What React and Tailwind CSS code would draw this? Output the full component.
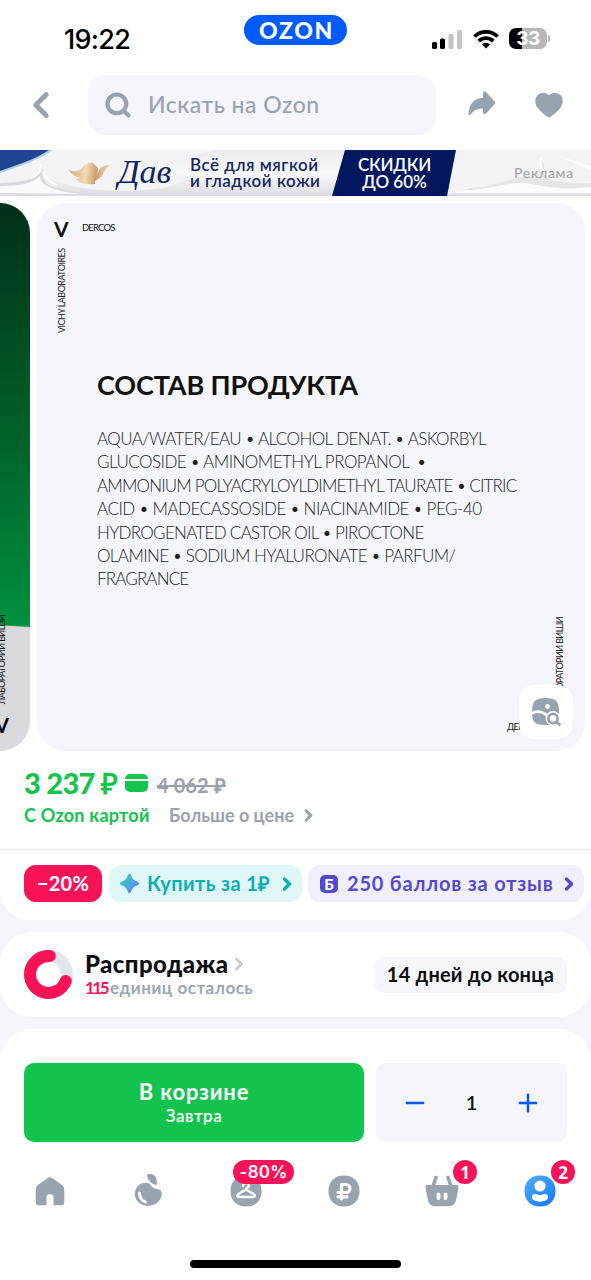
import { ChevronLeft, ChevronRight, Minus, Plus, Search } from 'lucide-react'

const ingredients = [
  { text: 'AQUA/WATER/EAU • ALCOHOL DENAT. • ASKORBYL', tracking: 'tracking-[-0.57px]' },
  { text: 'GLUCOSIDE • AMINOMETHYL PROPANOL  •', tracking: 'tracking-[-0.53px]' },
  { text: 'AMMONIUM POLYACRYLOYLDIMETHYL TAURATE • CITRIC', tracking: 'tracking-[-0.82px]' },
  { text: 'ACID • MADECASSOSIDE • NIACINAMIDE • PEG-40', tracking: 'tracking-[-0.48px]' },
  { text: 'HYDROGENATED CASTOR OIL • PIROCTONE', tracking: 'tracking-[-0.7px]' },
  { text: 'OLAMINE • SODIUM HYALURONATE • PARFUM/', tracking: 'tracking-[-0.6px]' },
  { text: 'FRAGRANCE', tracking: 'tracking-[-0.85px]' },
]

const blob = 'M16 .5C25.500.5 31.500 6.500 31.500 16S25.500 31.500 16 31.500.5 25.500.5 16 6.500.5 16 .5z'

function StatusBar() {
  return (
    <div className="flex h-[75px] items-start pl-[64px]">
      <div className="mt-[26px] w-[119px] font-['Inter'] text-[27px] leading-[28px] font-medium tracking-[-0.7px] text-black">19:22</div>
      <div className="mt-[15px] ml-[61px] flex h-[30px] w-[103px] items-center justify-center rounded-full bg-[#005bff] pl-[2px] text-[23px] leading-[30px] font-black tracking-[1.6px] text-white">
        OZON
      </div>
      <div className="mt-[28px] ml-[85px] flex items-center">
        <svg width="31" height="20" viewBox="0 0 31 20">
          <rect x="0" y="13" width="5" height="7" rx="1.5" />
          <rect x="8" y="9.500" width="5" height="10.500" rx="1.500" />
          <rect x="16.500" y="5" width="5" height="15" rx="1.500" fill="#c4c4c4" />
          <rect x="25" y="1" width="5" height="19" rx="1.500" fill="#c4c4c4" />
        </svg>
        <svg className="ml-[10px]" width="26" height="20" viewBox="0 0 26 20" fill="none" stroke="#000" strokeWidth="3.800">
          <path d="M1.500 7.500a16.500 16.500 0 0 1 23 0" />
          <path d="M5.700 12.200a10.300 10.300 0 0 1 14.600 0" />
          <path d="M13 19.500l-4-4.100a5.700 5.700 0 0 1 8 0z" fill="#000" stroke="none" />
        </svg>
        <div className="ml-[10px] flex h-[21px] w-[38px] items-center justify-center rounded-[7px] bg-linear-to-r from-black from-34% to-[#b8b8b8] to-34% font-['Inter'] text-[19px] leading-[21px] font-bold tracking-[-0.5px] text-white">
          33
        </div>
        <div className="ml-px h-[7px] w-[2px] shrink-0 rounded-r-full bg-[#b8b8b8]" />
      </div>
    </div>
  )
}

function Header() {
  return (
    <div className="flex h-[75px] items-start text-[#97a3ae]">
      <ChevronLeft className="mt-[9px] ml-[20px] h-[42px] w-[42px]" strokeWidth={2.8} />
      <div className="ml-[26px] flex h-[60px] w-[348px] items-center rounded-[18px] bg-[#f5f6fb] pl-[16px]">
        <Search className="h-[28px] w-[28px]" strokeWidth={3.6} />
        <span className="mb-[2px] ml-[16px] text-[23px] leading-[30px] font-medium tracking-[0.5px] whitespace-nowrap text-[#99a3ae]">Искать на Ozon</span>
      </div>
      <svg className="mt-[15px] ml-[31px]" width="30" height="28" viewBox="0 0 30 28" fill="currentColor">
        <path d="M16 3.500c0-2.200 1.600-2.700 3-1.500l8.500 9.300c1 1.100 1 2.300 0 3.300L19 23.500c-1.400 1.200-3 .7-3-1.300v-3.800c-5.500 0-9 1.600-12.300 6-1 1.400-2.400.8-2.200-.8C2.300 13.300 7.300 8.300 16 7.700z" />
      </svg>
      <svg className="mt-[17px] ml-[38px]" width="28" height="27" viewBox="0 0 28 27" fill="currentColor">
        <path d="M14 3.200C17-.2 22.500-.2 25.600 3.200 29 7 28 12.500 25 16.300c-2.600 3.300-6.500 6.600-9.700 8.700-.9.500-1.700.5-2.600 0C9.500 22.900 5.600 19.600 3 16.300 0 12.500-1 7 2.400 3.200 5.500-.2 11-.2 14 3.200z" />
      </svg>
    </div>
  )
}

function Banner() {
  return (
    <div className="relative flex h-[46px] overflow-hidden bg-linear-to-b from-[#ececf0] via-[#fafafc] to-[#dddde1]">
      <svg className="absolute inset-0" width="591" height="46" viewBox="0 0 591 46" fill="none">
        <path d="M52 0C34 12 20 17 0 24v12c25-5 30-8 44-10 18 9 55 20 120 12l20-7-40-12L215 0z" fill="#f4f4f7" />
        <path d="M0 33c25-1 36-3 42-16 2 10 0 15 10 20 30 8 50 7 75 6L20 46 0 42z" fill="#d9d9df" />
        <path d="M0 36c22 0 33-3 40-10 0 11 20 16 42 18L0 43z" fill="#fafafd" />
        <path d="M41 14c1 7-3 11-10 14m12-7c1 7 5 10 14 14" stroke="#fff" strokeWidth="2" />
        <path d="M0 0h53C36 11 18 17 0 23z" fill="#a9cfed" />
        <path d="M0 0h49C34 10 17 15 0 21z" fill="#1f4590" />
        <path d="M455 0h136v44H440z" fill="#f3f3f6" />
        <path d="M470 38c20 0 35-8 52-11 9-1 17-4 22-15 0 12 2 18 12 19 15 2 24 3 35 2v11H450z" fill="#e6e6ea" />
        <path d="M455 40c30 2 50-8 68-7 20 2 32 8 68 4v6H455zM555 5l36 11v4z" fill="#fcfcfe" />
        <path d="M541 8c-2 9 2 14 8 20" stroke="#fff" strokeWidth="2" />
        <path d="M345 0h111l-9 46H332z" fill="#03175e" />
        <defs>
          <linearGradient id="gold" x1="70" y1="20" x2="110" y2="24" gradientUnits="userSpaceOnUse">
            <stop stopColor="#d4ad7f" />
            <stop offset=".4" stopColor="#f3d9b4" />
            <stop offset=".65" stopColor="#cda070" />
            <stop offset="1" stopColor="#f5ddbb" />
          </linearGradient>
        </defs>
        <path d="M68 20c5 2 10 2 14-2 3-4 7-6 11-5l4 4c2 2 1 5 0 7 3-6 6-9 13-9-6 5-6 9-9 12-3 2-4 3-6 4v3c-6 1-14 0-19-5l5-1c-5-1-9-4-13-8z" fill="url(#gold)" />
      </svg>
      <div className="relative mt-[4px] ml-[118px] w-[72px] font-['Liberation_Serif'] text-[34px] leading-[36px] tracking-[-0.1px] text-[#0c2461] italic">Дав</div>
      <div className="relative mt-[7px] w-[142px] text-[17px] leading-[16px] font-semibold tracking-[0.5px] whitespace-nowrap text-[#14275f]">
        <p>Всё для мягкой</p>
        <p>и гладкой кожи</p>
      </div>
      <div className="relative mt-[6px] w-[125px] text-center text-[17px] leading-[17px] font-semibold whitespace-nowrap text-white">
        <p className="tracking-[-0.2px]">СКИДКИ</p>
        <p>ДО 60%</p>
      </div>
      <div className="relative mt-[14px] ml-[57px] text-[14px] leading-[18px] font-medium tracking-[0.7px] text-[#a5a5a8]">Реклама</div>
    </div>
  )
}

function Gallery() {
  return (
    <div className="mt-[7px] flex h-[548px] gap-[7px]">
      <div className="relative w-[30px] shrink-0 overflow-hidden rounded-r-[30px] bg-[#d8d9dc]">
        <div className="h-[424px] bg-linear-to-b from-[#00301a] via-[#005d27] to-[#009141] [clip-path:polygon(0_0,100%_0,100%_100%,0_99.6%)]" />
        <div className="absolute top-[412px] left-[-4px] rotate-180 text-[9px] leading-[12px] tracking-[-0.6px] whitespace-nowrap text-[#161616] [writing-mode:vertical-rl]">ЛАБОРАТОРИИ ВИШИ</div>
        <div className="absolute top-[511px] left-[-5px] text-[20px] leading-[22px] font-bold text-black">V</div>
      </div>
      <div className="relative flex w-[548px] shrink-0 flex-col overflow-hidden rounded-[28px] bg-[#f5f6fb]">
        <div className="flex h-[26px] items-center pt-[24px] pl-[17px] text-[#111]">
          <span className="w-[28px] text-[21px] leading-none font-bold">V</span>
          <span className="text-[9.5px] leading-none tracking-[-0.85px]">DERCOS</span>
        </div>
        <div className="mt-[19px] ml-[18px] h-[85px] rotate-180 self-start text-[9px] leading-[13px] tracking-[-0.55px] whitespace-nowrap text-[#222] [writing-mode:vertical-rl]">
          VICHY LABORATOIRES
        </div>
        <h1 className="mt-[36px] ml-[60px] text-[27px] leading-[32px] font-bold tracking-[-0.15px] whitespace-nowrap text-[#111]">СОСТАВ ПРОДУКТА</h1>
        <div className="mt-[26px] ml-[60px] text-[17px] leading-[23.400px] font-light whitespace-pre text-[#222]">
          {ingredients.map((line) => (
            <p key={line.text} className={line.tracking}>{line.text}</p>
          ))}
        </div>
        <div className="absolute top-[414px] left-[516px] rotate-180 text-[9px] leading-[13px] tracking-[-0.6px] whitespace-nowrap text-[#222] [writing-mode:vertical-rl]">ЛАБОРАТОРИИ ВИШИ</div>
        <div className="absolute top-[517px] left-[470px] text-[9.5px] leading-[13px] tracking-[-0.9px] text-[#222]">ДЕРКОС</div>
        <div className="absolute right-[12px] bottom-[12px] flex h-[54px] w-[54px] items-center justify-center rounded-[16px] bg-white">
          <svg width="30" height="28" viewBox="0 0 30 28" fill="none">
            <path d="M14.500 0C25 0 28 3 28 14s-3 13-13.500 13S1 24.500 1 14 4 0 14.500 0z" fill="#97a3ae" />
            <path d="M0 16c5-3.500 11-2.500 16 1.500" stroke="#fff" strokeWidth="2.600" />
            <circle cx="16.500" cy="8.500" r="2.400" fill="#fff" />
            <path d="M19 19h11v9H20z" fill="#fff" />
            <circle cx="22" cy="20.500" r="7.400" fill="#fff" />
            <circle cx="22" cy="20.500" r="4.600" stroke="#97a3ae" strokeWidth="2.600" />
            <path d="M25.700 24.200l2.600 2.300" stroke="#97a3ae" strokeWidth="3" strokeLinecap="round" />
          </svg>
        </div>
      </div>
    </div>
  )
}

function Price() {
  return (
    <div className="h-[99px] border-b border-[#e4e5ea] pt-[16px] pl-[24px] whitespace-nowrap">
      <div className="flex h-[32px] items-center">
        <span className="w-[101px] text-[29px] leading-[32px] font-black tracking-[-0.7px] text-[#12c44d]">3 237 ₽</span>
        <div className="flex w-[23px] flex-col gap-[2px]">
          <div className="h-[5px] rounded-t-[5px] bg-[#12c44d]" />
          <div className="h-[11px] rounded-b-[5px] bg-[#12c44d]" />
        </div>
        <span className="mt-[4px] ml-[9px] text-[20px] leading-[24px] font-bold tracking-[0.1px] text-[#9ba1ac] line-through">4 062 ₽</span>
      </div>
      <div className="mt-[4px] flex h-[24px] items-center">
        <span className="w-[145px] text-[18px] font-bold tracking-[0.25px] text-[#12c44d]">С Ozon картой</span>
        <span className="w-[130px] text-[18px] font-bold text-[#9ba1ac]">Больше о цене</span>
        <ChevronRight className="h-[19px] w-[19px] text-[#9ba1ac]" strokeWidth={4} />
      </div>
    </div>
  )
}

function Chips() {
  return (
    <div className="flex h-[70px] gap-[7px] overflow-hidden rounded-b-[30px] bg-white pt-[15px] pl-[24px] text-[20px] font-bold whitespace-nowrap">
      <div className="flex h-[37px] w-[78px] shrink-0 items-center justify-center rounded-[12px] bg-[#fa1259] pb-px tracking-[0.2px] text-white">−20%</div>
      <div className="flex h-[37px] w-[193px] shrink-0 items-center rounded-[12px] bg-[#dff7f7] pl-[10px] text-[#0caeb3]">
        <svg width="21" height="21" viewBox="0 0 21 21">
          <defs>
            <linearGradient id="spark" x1="3" y1="3" x2="17" y2="18" gradientUnits="userSpaceOnUse">
              <stop stopColor="#35d0bd" />
              <stop offset="1" stopColor="#5a86f5" />
            </linearGradient>
          </defs>
          <path d="M8.800 2.500c.7-2.200 2.700-2.200 3.400 0 1 3.300 3 5.300 6.300 6.300 2.200.7 2.200 2.700 0 3.400-3.300 1-5.300 3-6.300 6.300-.7 2.200-2.700 2.200-3.400 0-1-3.300-3-5.300-6.300-6.300-2.200-.7-2.200-2.700 0-3.400 3.300-1 5.300-3 6.300-6.300z" fill="url(#spark)" />
        </svg>
        <span className="mb-px ml-[7px] w-[130px] tracking-[0.4px]">Купить за 1₽</span>
        <ChevronRight className="h-[20px] w-[20px]" strokeWidth={4} />
      </div>
      <div className="-ml-px flex h-[37px] w-[276px] shrink-0 items-center rounded-[12px] bg-[#f1effc] pl-[12px] text-[#5449d2]">
        <span className="flex h-[18px] w-[18px] items-center justify-center rounded-[5px] bg-[#5449d2] text-[15px] leading-[18px] font-black text-white">Б</span>
        <span className="mb-px ml-[9px] w-[212px] tracking-[0.8px]">250 баллов за отзыв</span>
        <ChevronRight className="h-[20px] w-[20px]" strokeWidth={4} />
      </div>
    </div>
  )
}

function Sale() {
  return (
    <div className="mt-[12px] flex h-[85px] items-center rounded-[32px] bg-white pr-[24px] pl-[24px] whitespace-nowrap">
      <svg width="49" height="49" viewBox="0 0 49 49" fill="none" strokeWidth="12">
        <circle cx="24.500" cy="24.500" r="18.500" stroke="#e1e5ec" />
        <path d="M25.800 6A18.500 18.500 0 1 0 41.800 31" stroke="#fa1259" strokeLinecap="round" />
      </svg>
      <div className="ml-[12px]">
        <div className="flex items-center text-[24px] leading-[26px] font-black tracking-[0.4px] text-[#0b0d10]">
          <span className="w-[144px]">Распродажа</span>
          <ChevronRight className="h-[20px] w-[20px] text-[#c9cdd3]" strokeWidth={3.600} />
        </div>
        <div className="flex text-[17px] leading-[22px] font-bold text-[#9ba6b1]">
          <span className="w-[25px] tracking-[-2.5px] text-[#fa1259]">115</span>
          <span className="tracking-[0.5px]">единиц осталось</span>
        </div>
      </div>
      <div className="ml-auto flex h-[36px] w-[193px] items-center justify-center rounded-[10px] bg-[#f6f7fa] pb-px text-[20px] font-bold tracking-[0.2px] text-[#0b0d10]">14 дней до конца</div>
    </div>
  )
}

function CartBar() {
  return (
    <div className="flex gap-[12px] pt-[34px] pl-[24px]">
      <button className="flex h-[79px] w-[340px] flex-col items-center justify-center rounded-[10px] bg-[#12c44d] pt-px text-white">
        <span className="text-[22px] leading-[24px] font-bold tracking-[0.8px]">В корзине</span>
        <span className="text-[17px] leading-[23px] font-semibold tracking-[0.5px]">Завтра</span>
      </button>
      <div className="flex h-[79px] w-[191px] items-center justify-between rounded-[10px] bg-[#f5f6fb] px-[25px] text-[#0b55f5]">
        <Minus className="h-[28px] w-[28px]" strokeWidth={2.100} />
        <span className="mb-px text-[20px] font-semibold text-[#111]">1</span>
        <Plus className="h-[28px] w-[28px]" strokeWidth={2.100} />
      </div>
    </div>
  )
}

function Tab({ children, badge, wide }) {
  return (
    <div className="relative flex h-[34px] w-[98px] items-center justify-center text-[#97a3ae]">
      {children}
      {badge && (
        <span
          className={
            wide
              ? "absolute top-[-14px] left-[36px] flex h-[24px] w-[61px] items-center justify-center rounded-full bg-[#fa1259] font-['Inter'] text-[17px] leading-none font-semibold tracking-[0.2px] text-white"
              : "absolute top-[-14px] left-[60px] flex h-[24px] w-[24px] items-center justify-center rounded-full bg-[#fa1259] font-['Noto_Sans'] text-[17px] leading-none font-bold text-white"
          }
        >
          {badge}
        </span>
      )}
    </div>
  )
}

function TabBar() {
  return (
    <div className="mt-[32px] flex pl-[1px]">
      <Tab>
        <svg width="30" height="30" viewBox="0 0 30 30" fill="currentColor">
          <path d="M13.200 1.800c1.200-.9 2.400-.9 3.600 0l9.500 6.700c2 1.400 3 3 3 5.500v11.500c0 3-1 3.700-3.500 3.700H18.500v-8.500c0-2-1.300-2.500-3.500-2.500s-3.500.5-3.500 2.500v8.500H4.200C1.700 29.200.7 28.500.7 25.500V14c0-2.500 1-4.100 3-5.500z" />
        </svg>
      </Tab>
      <Tab>
        <svg className="mb-[3px]" width="30" height="34" viewBox="0 0 30 34" fill="currentColor">
          <path d="M14 1.500c7-2 11 3 9.500 10.500C18 11 14.500 7.500 14 1.500z" />
          <path d="M1.800 20C3 11.500 11 7.500 17 11.300c2 3.700 5 4.700 9.500 5.200 4 2.500 2 9-1 12-5 5.500-14 5.500-19 1.500-3-2.500-5-5.500-4.700-10z" />
          <path d="M6.500 20c0 4 2 7.500 6 9" fill="none" stroke="#fff" strokeWidth="3" strokeLinecap="round" />
        </svg>
      </Tab>
      <Tab badge="-80%" wide>
        <svg width="32" height="32" viewBox="0 0 32 32" fill="none">
          <path d={blob} fill="currentColor" />
          <path d="M13 11c0-4 6-4 6-.5 0 2-3 2.500-3 4m0 0l-7.500 4.500c-2 1.200-1.500 3 1 3h13c2.500 0 3-1.800 1-3z" stroke="#fff" strokeWidth="2.600" strokeLinecap="round" strokeLinejoin="round" />
        </svg>
      </Tab>
      <Tab>
        <svg width="32" height="32" viewBox="0 0 32 32" fill="none">
          <path d={blob} fill="currentColor" />
          <path d="M13.500 24V9.500h4.500a4 4 0 0 1 0 8H10m0 4.300h9" stroke="#fff" strokeWidth="3.200" strokeLinecap="round" strokeLinejoin="round" />
        </svg>
      </Tab>
      <Tab badge="1">
        <svg width="36" height="32" viewBox="0 0 36 32" fill="none">
          <path d="M12 2.500L9 11m15-8.500L27 11" stroke="currentColor" strokeWidth="3.600" strokeLinecap="round" />
          <path d="M3.500 10h29c1.600 0 2.300 1 2 2.500L32.300 24c-1 5-3.300 7.300-8.300 7.300H12c-5 0-7.300-2.300-8.300-7.300L1.500 12.500c-.3-1.500.4-2.500 2-2.500z" fill="currentColor" />
          <path d="M14.500 19.500V23m7-3.500V23" stroke="#fff" strokeWidth="4" strokeLinecap="round" />
        </svg>
      </Tab>
      <Tab badge="2">
        <svg width="32" height="32" viewBox="0 0 32 32" fill="#fff">
          <defs>
            <linearGradient id="profile" x1="4" y1="2" x2="26" y2="30" gradientUnits="userSpaceOnUse">
              <stop stopColor="#4cabfa" />
              <stop offset="1" stopColor="#177bff" />
            </linearGradient>
          </defs>
          <path d={blob} fill="url(#profile)" />
          <circle cx="16" cy="11" r="5.600" />
          <path d="M8 22.500c0-4 3-4 4.500-3.200 2 1.100 5 1.100 7 0 1.500-.8 4.500-.8 4.500 3.200 0 5.500-16 5.500-16 0z" />
        </svg>
      </Tab>
    </div>
  )
}

export default function App() {
  return (
    <div className="h-[1280px] w-[591px] overflow-hidden bg-[#f5f6fb] font-['Lato','Open_Sans',sans-serif]">
      <div className="bg-white">
        <StatusBar />
        <Header />
        <Banner />
        <Gallery />
        <Price />
      </div>
      <Chips />
      <Sale />
      <div className="mt-[12px] h-[251px] rounded-t-[32px] bg-white">
        <CartBar />
        <TabBar />
        <div className="mx-auto mt-[52px] h-[8px] w-[211px] rounded-full bg-black" />
      </div>
    </div>
  )
}
